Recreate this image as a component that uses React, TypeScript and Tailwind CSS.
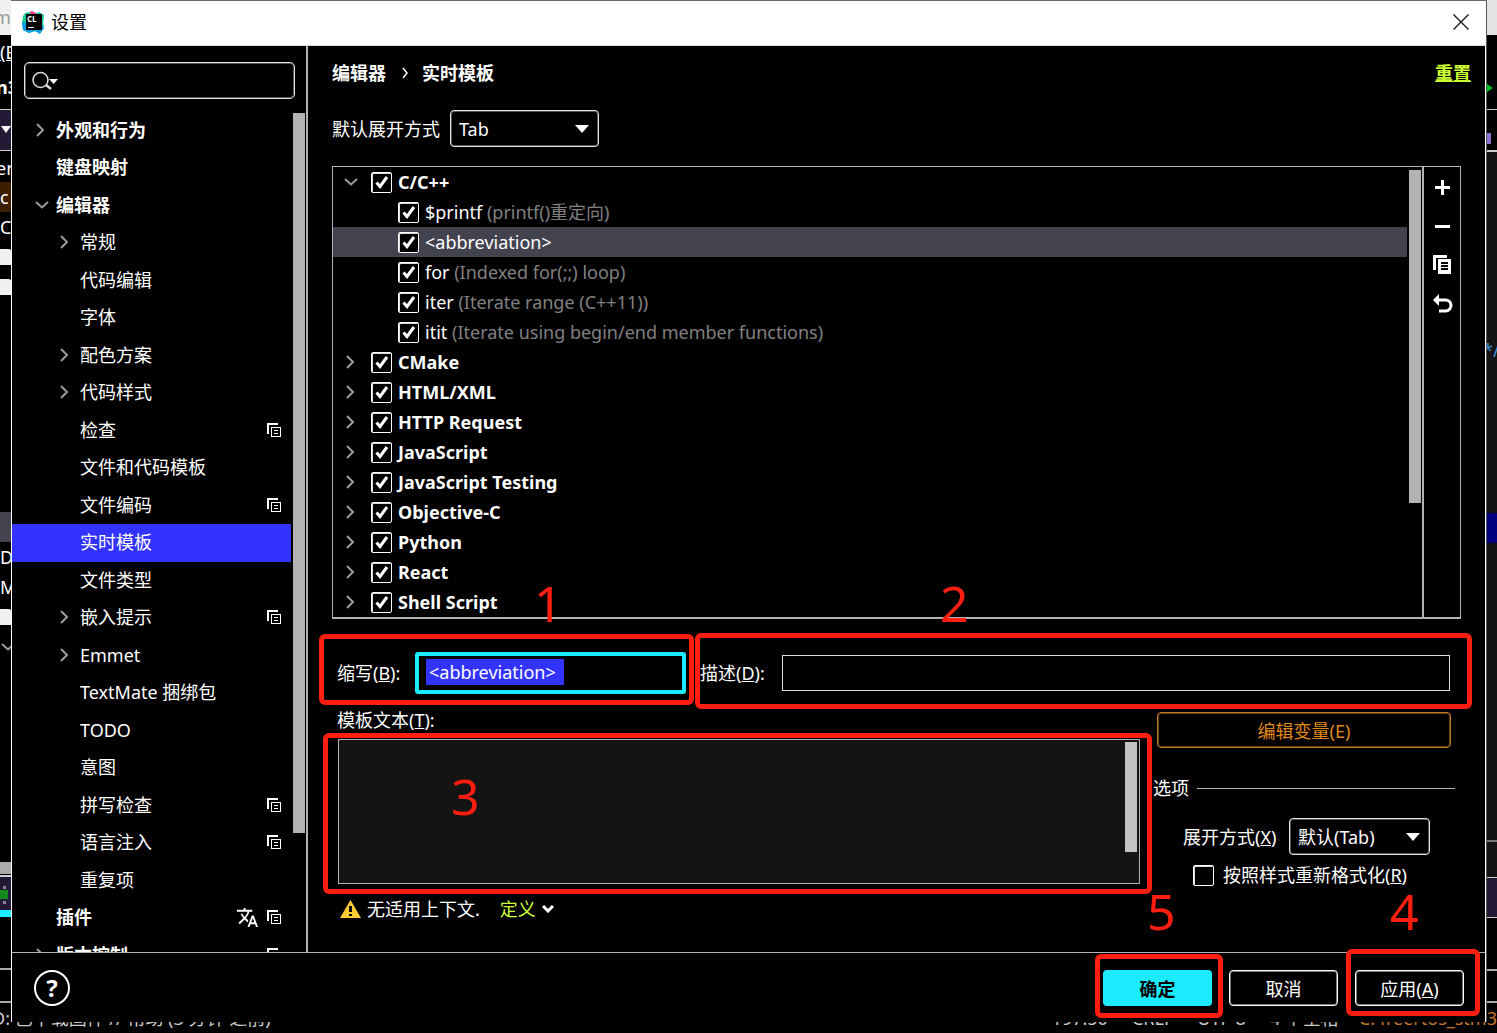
import React from "react";
import { MdTranslate } from "react-icons/md";

type IconProps = { className?: string };

function ChevronRight({ className = "" }: IconProps) {
  return (
    <svg viewBox="0 0 12 16" className={`h-4 w-3 shrink-0 ${className}`} fill="none" stroke="#9d9d9d" strokeWidth="2" aria-hidden="true">
      <path d="M2 2 L8 8 L2 14" />
    </svg>
  );
}

function ChevronDown({ className = "" }: IconProps) {
  return (
    <svg viewBox="0 0 16 12" className={`h-3 w-4 shrink-0 ${className}`} fill="none" stroke="#9d9d9d" strokeWidth="2" aria-hidden="true">
      <path d="M2 3 L8 8.500 L14 3" />
    </svg>
  );
}

function ProjectLevelIcon() {
  return (
    <svg viewBox="0 0 14 14" className="size-3.5 shrink-0" shapeRendering="crispEdges" aria-hidden="true">
      <path d="M0 0H11V2H2V11H0Z" fill="#fff" />
      <path d="M4 4H14V14H4Z" fill="#fff" />
      <path d="M5 5H13V13H5Z" fill="#000" />
      <path d="M7 7H11V8H7ZM7 10H11V11H7Z" fill="#fff" />
    </svg>
  );
}

function ClionLogo() {
  return (
    <svg viewBox="0 0 23 23" className="h-[23px] w-[23px]" aria-hidden="true">
      <path d="M1 5 L3 2 L7 1 L12 3 L17 1 L22 4 L21 10 L22 17 L18 22 L13 20 L7 22 L1 19 L0 12 Z" fill="#22cf96" />
      <path d="M8 1 L10 0 L14 2 L16 5 L9 5 Z" fill="#f0388c" />
      <path d="M0 11 L5 12 L9 19 L20 13 L22 17 L18 23 L13 20 L7 22 L1 19 Z" fill="#0a9de8" />
      <path d="M16 3 L22 4 L21 12 L18 12 Z" fill="#20c9a8" />
      <rect x="4" y="3" width="16" height="16" fill="#000" />
      <text x="5" y="11" fontSize="8" fontWeight="700" fill="#fff" fontFamily="Open Sans, sans-serif">CL</text>
      <rect x="6" y="16" width="6" height="1" fill="#fff" />
    </svg>
  );
}

function Check({ id, checked = true }: { id: string; checked?: boolean }) {
  return (
    <span className="relative size-[21px] shrink-0">
      <input
        id={id}
        type="checkbox"
        defaultChecked={checked}
        className="peer block size-[21px] appearance-none rounded-[2px] border border-white bg-black shadow-[inset_1px_1px_0_#ddd]"
      />
      <svg viewBox="0 0 21 21" className="pointer-events-none absolute inset-0 hidden peer-checked:block" fill="none" stroke="#fff" strokeWidth="3" aria-hidden="true">
        <path d="M5.5 10.5 L9 14.5 L16 5" />
      </svg>
    </span>
  );
}

function Dropdown({ id, value, className }: { id: string; value: string; className: string }) {
  return (
    <span className={`relative ${className}`}>
      <select
        id={id}
        className="h-[37px] w-full appearance-none rounded-[4px] border border-[#e4e4e4] bg-black px-2 text-[18px] shadow-[inset_0_0_0_1px_#555]"
      >
        <option>{value}</option>
      </select>
      <svg viewBox="0 0 14 8" className="pointer-events-none absolute top-[15px] right-2.5 h-2 w-3.5" aria-hidden="true">
        <path d="M0 0H14L7 8Z" fill="#fff" />
      </svg>
    </span>
  );
}

function Mark({ box, digit, n }: { box: string; digit: string; n: number }) {
  return (
    <>
      <span className={`pointer-events-none absolute z-10 rounded-[6px] border-5 border-[#ff1e0f] ${box}`} />
      <span className={`pointer-events-none absolute z-10 text-[50px] leading-[50px] text-[#ff1e0f] ${digit}`}>{n}</span>
    </>
  );
}

type Node = { text: string; level: 0 | 1; arrow?: "right" | "down"; project?: boolean; translate?: boolean; selected?: boolean };

const settings: Node[] = [
  { text: "外观和行为", level: 0, arrow: "right" },
  { text: "键盘映射", level: 0 },
  { text: "编辑器", level: 0, arrow: "down" },
  { text: "常规", level: 1, arrow: "right" },
  { text: "代码编辑", level: 1 },
  { text: "字体", level: 1 },
  { text: "配色方案", level: 1, arrow: "right" },
  { text: "代码样式", level: 1, arrow: "right" },
  { text: "检查", level: 1, project: true },
  { text: "文件和代码模板", level: 1 },
  { text: "文件编码", level: 1, project: true },
  { text: "实时模板", level: 1, selected: true },
  { text: "文件类型", level: 1 },
  { text: "嵌入提示", level: 1, arrow: "right", project: true },
  { text: "Emmet", level: 1, arrow: "right" },
  { text: "TextMate 捆绑包", level: 1 },
  { text: "TODO", level: 1 },
  { text: "意图", level: 1 },
  { text: "拼写检查", level: 1, project: true },
  { text: "语言注入", level: 1, project: true },
  { text: "重复项", level: 1 },
  { text: "插件", level: 0, project: true, translate: true },
  { text: "版本控制", level: 0, arrow: "right", project: true },
];

function SettingsRow({ node }: { node: Node }) {
  return (
    <li
      className={`flex h-[37px] shrink-0 items-center pr-2.5 pb-0.5 even:h-[38px] ${node.level === 0 ? "pl-5 font-bold" : "pl-11"} ${node.selected ? "bg-[#3333ff]" : ""}`}
    >
      <span className="flex w-6 shrink-0 pl-0.5">
        {node.arrow === "right" && <ChevronRight className="ml-px" />}
        {node.arrow === "down" && <ChevronDown />}
      </span>
      <span className="flex-1 whitespace-nowrap">{node.text}</span>
      {node.translate && <MdTranslate className="mr-2 size-[23px]" aria-hidden="true" />}
      {node.project && <ProjectLevelIcon />}
    </li>
  );
}

function Sidebar() {
  return (
    <aside className="flex w-[296px] shrink-0 flex-col border-r-2 border-[#b3b3b3]">
      <label className="mt-4 mr-[11px] ml-3 flex h-[37px] shrink-0 items-center rounded-[5px] border border-[#e4e4e4] px-[7px] shadow-[inset_0_0_0_1px_#555]">
        <svg viewBox="0 0 26 20" className="h-5 w-[26px] shrink-0" aria-hidden="true">
          <circle cx="8.500" cy="9" r="7.500" fill="none" stroke="#ddd" strokeWidth="1.500" />
          <path d="M14 14 L19 18" stroke="#ddd" strokeWidth="2.500" />
          <path d="M17 8H26L21.500 13Z" fill="#fff" />
        </svg>
        <input type="search" aria-label="搜索设置" className="min-w-0 flex-1 appearance-none bg-transparent outline-none" />
      </label>
      <div className="mt-3 flex min-h-0 flex-1">
        <ul className="flex min-w-0 flex-1 flex-col overflow-hidden pt-px" aria-label="设置">
          {settings.map((n) => (
            <SettingsRow key={n.text} node={n} />
          ))}
        </ul>
        <div className="mt-0.5 mr-px ml-0.5 h-[720px] w-3 bg-[#b3b3b3]" />
      </div>
    </aside>
  );
}

type Template = { name: string; hint?: string; group?: "right" | "down"; selected?: boolean };

const templates: Template[] = [
  { name: "C/C++", group: "down" },
  { name: "$printf", hint: "(printf()重定向)" },
  { name: "<abbreviation>", selected: true },
  { name: "for", hint: "(Indexed for(;;) loop)" },
  { name: "iter", hint: "(Iterate range (C++11))" },
  { name: "itit", hint: "(Iterate using begin/end member functions)" },
  { name: "CMake", group: "right" },
  { name: "HTML/XML", group: "right" },
  { name: "HTTP Request", group: "right" },
  { name: "JavaScript", group: "right" },
  { name: "JavaScript Testing", group: "right" },
  { name: "Objective-C", group: "right" },
  { name: "Python", group: "right" },
  { name: "React", group: "right" },
  { name: "Shell Script", group: "right" },
];

function TemplateRow({ t }: { t: Template }) {
  const id = `tpl-${t.name}`;
  return (
    <li className={`flex h-[30px] items-center ${t.group ? "pl-2.5 font-bold" : "pl-[65px]"} ${t.selected ? "bg-[#43424f]" : ""}`}>
      {t.group && (
        <span className="flex w-7 shrink-0">
          {t.group === "right" ? <ChevronRight className="ml-0.5" /> : <ChevronDown />}
        </span>
      )}
      <Check id={id} />
      <label htmlFor={id} className="ml-1.5 whitespace-nowrap">
        {t.name}
        {t.hint && <span className="text-[#808080]"> {t.hint}</span>}
      </label>
    </li>
  );
}

function TemplatePanel() {
  return (
    <div className="flex border border-b-2 border-[#b3b3b3]">
      <ul className="min-w-0 flex-1" aria-label="实时模板">
        {templates.map((t) => (
          <TemplateRow key={t.name} t={t} />
        ))}
      </ul>
      <div className="mt-[3px] mr-px ml-0.5 h-[333px] w-3 bg-[#b3b3b3]" />
      <div className="flex w-[38px] flex-col items-center gap-[19px] border-l-2 border-[#b3b3b3] pt-2.5 pl-0.5">
        <button aria-label="添加" className="size-5">
          <svg viewBox="0 0 20 20" shapeRendering="crispEdges"><path d="M8 3H11V9H17V12H11V18H8V12H2V9H8Z" fill="#fff" /></svg>
        </button>
        <button aria-label="移除" className="size-5">
          <svg viewBox="0 0 20 20" shapeRendering="crispEdges"><path d="M2 9H17V12H2Z" fill="#fff" /></svg>
        </button>
        <button aria-label="复制" className="size-5">
          <svg viewBox="0 0 20 20" shapeRendering="crispEdges">
            <path d="M0 0H14V3H3V15H0Z M5 4H18V19H5Z" fill="#fff" />
            <path d="M8 7H15V9H8ZM8 10H15V12H8ZM8 13H15V15H8Z" fill="#000" />
          </svg>
        </button>
        <button aria-label="还原" className="size-5">
          <svg viewBox="0 0 20 20">
            <path d="M3 6H12A5.500 5.500 0 0 1 13 17H6" fill="none" stroke="#fff" strokeWidth="3" />
            <path d="M0 6L6 0V12Z" fill="#fff" />
          </svg>
        </button>
      </div>
    </div>
  );
}

function Editor() {
  return (
    <div className="flex min-h-0 flex-1 flex-col pt-[33px]">
      <div className="flex h-[42px] shrink-0 items-center pl-[5px]">
        <div className="relative flex items-center">
          <label htmlFor="abbr" className="w-[78px] whitespace-nowrap">缩写(<u>B</u>):</label>
          <div className="flex h-[42px] w-[271px] items-start rounded-[3px] border-4 border-[#1aebff] px-[7px] pt-[3px]">
            <input id="abbr" defaultValue="<abbreviation>" className="h-[26px] w-[138px] bg-[#3333ff] pl-[3px] outline-none" />
          </div>
          <Mark n={1} box="-top-[18px] -left-[18px] -right-2 -bottom-[11px]" digit="-top-[74px] left-[197px]" />
        </div>
        <div className="relative ml-3.5 flex flex-1 items-center">
          <label htmlFor="desc" className="w-[82px] whitespace-nowrap">描述(<u>D</u>):</label>
          <input id="desc" className="mr-[11px] h-9 min-w-0 flex-1 border border-[#dcdcdc] bg-black outline-none" />
          <Mark n={2} box="-top-[22px] -left-[5px] -right-[11px] -bottom-[18px]" digit="-top-[77px] left-[240px]" />
        </div>
      </div>
      <div className="flex min-h-0 flex-1 pl-[5px]">
        <div className="flex min-w-0 flex-1 flex-col">
          <label htmlFor="tpl-text" className="mt-3 mb-[5px] h-7 shrink-0 leading-7">模板文本(<u>T</u>):</label>
          <div className="relative ml-px flex min-h-0 flex-1 border border-[#b3b3b3] bg-[#141414]">
            <textarea id="tpl-text" className="min-w-0 flex-1 resize-none bg-transparent outline-none" />
            <div className="mt-0.5 mr-0.5 h-[110px] w-3 bg-[#c3c3c3]" />
            <Mark n={3} box="-top-[7px] -left-[16px] -right-[13px] -bottom-[11px]" digit="top-[31px] left-[112px]" />
          </div>
          <div className="mt-[11px] mb-[29px] flex h-7 shrink-0 items-center pl-[3px]">
            <svg viewBox="0 0 21 18" className="h-[18px] w-[21px]" aria-hidden="true">
              <path d="M10.500 0L21 18H0Z" fill="#ffcc33" />
              <path d="M9 6H12V12H9ZM9 14H12V16H9Z" fill="#000" />
            </svg>
            <span className="ml-1.5">无适用上下文.</span>
            <a href="#define" className="ml-5 flex items-center text-[#ccff33]">
              定义
              <svg viewBox="0 0 12 8" className="ml-1.5 h-2 w-3" fill="none" stroke="#fff" strokeWidth="3" aria-hidden="true">
                <path d="M1 1L6 6L11 1" />
              </svg>
            </a>
          </div>
        </div>
        <div className="ml-[13px] flex w-[308px] shrink-0 flex-col">
          <button className="mt-[18px] mr-2.5 ml-1 h-9 rounded-[4px] border border-[#b87a28] pt-0.5 text-[#e08a1a] shadow-[inset_0_0_0_1px_#6a4414]">
            编辑变量(E)
          </button>
          <fieldset className="mt-7">
            <legend className="flex w-full items-center gap-2">
              <span>选项</span>
              <span className="mr-1.5 h-px flex-1 bg-[#b3b3b3]" />
            </legend>
            <div className="mt-[18px] flex items-center pl-[30px]">
              <label htmlFor="expand" className="w-[106px] whitespace-nowrap">展开方式(<u>X</u>)</label>
              <Dropdown id="expand" value="默认(Tab)" className="w-[141px]" />
            </div>
            <div className="mt-2 flex items-center gap-[9px] pl-10">
              <Check id="reformat" checked={false} />
              <label htmlFor="reformat" className="whitespace-nowrap">按照样式重新格式化(<u>R</u>)</label>
            </div>
          </fieldset>
        </div>
      </div>
    </div>
  );
}

function Footer() {
  return (
    <footer className="flex h-[70px] shrink-0 items-center border-t border-[#b3b3b3] pr-[21px] pl-[22px]">
      <button aria-label="帮助" className="flex size-9 items-center justify-center rounded-full border-2 border-white text-[24px] leading-none font-bold">?</button>
      <div className="ml-auto flex gap-[17px]">
        <div className="relative">
          <button className="h-9 w-[109px] rounded-[4px] bg-[#1aebff] pt-0.5 font-bold text-black">确定</button>
          <Mark n={5} box="-top-[16px] -left-2 -right-[11px] -bottom-3" digit="-top-[84px] left-[44px]" />
        </div>
        <button className="h-9 w-[109px] rounded-[4px] border border-white pt-0.5 shadow-[inset_0_0_0_1px_#777]">取消</button>
        <div className="relative">
          <button className="h-9 w-[109px] rounded-[4px] border border-white pt-0.5 shadow-[inset_0_0_0_1px_#777]">应用(<u>A</u>)</button>
          <Mark n={4} box="-top-[21px] -left-[9px] -right-4 -bottom-[10px]" digit="-top-[84px] left-[35px]" />
        </div>
      </div>
    </footer>
  );
}

function Dialog() {
  return (
    <section className="absolute top-0 right-2.5 bottom-[11px] left-[11px] flex flex-col border-t border-r border-t-[#6b6b6b] border-r-[#555] bg-black" role="dialog" aria-label="设置">
      <header className="flex h-[45px] shrink-0 items-center border-b border-[#d5ddd9] bg-white pr-[17px] pb-0.5 pl-[11px] text-black">
        <ClionLogo />
        <h1 className="ml-1.5">设置</h1>
        <button aria-label="关闭" className="ml-auto size-4">
          <svg viewBox="0 0 16 16" stroke="#111" strokeWidth="1.300"><path d="M0.500 0.500L15.500 15.500M15.500 0.500L0.500 15.500" /></svg>
        </button>
      </header>
      <div className="flex min-h-0 flex-1 flex-col border-r border-l border-white">
        <div className="flex min-h-0 flex-1">
          <Sidebar />
          <main className="flex min-w-0 flex-1 flex-col pr-6 pl-6">
            <div className="-mr-2.5 flex h-[54px] shrink-0 items-center pb-px font-bold">
              <span>编辑器</span>
              <svg viewBox="0 0 6 12" className="mr-3.5 ml-4 h-3 w-1.5" fill="none" stroke="#fff" strokeWidth="1.500" aria-hidden="true">
                <path d="M1 1L5 6L1 11" />
              </svg>
              <span>实时模板</span>
              <a href="#reset" className="ml-auto text-[#ccff33] underline">重置</a>
            </div>
            <div className="mt-2.5 mb-[19px] flex shrink-0 items-center">
              <label htmlFor="default-expand" className="w-[118px] whitespace-nowrap">默认展开方式</label>
              <Dropdown id="default-expand" value="Tab" className="w-[149px]" />
            </div>
            <TemplatePanel />
            <Editor />
          </main>
        </div>
        <Footer />
      </div>
    </section>
  );
}

function BackgroundLeft() {
  return (
    <div className="flex w-3 shrink-0 flex-col overflow-hidden whitespace-nowrap">
      <div className="h-[35px] bg-[#f0f0f0] leading-[35px] text-[#999]"><span className="-ml-1.5">m</span></div>
      <div className="h-[35px] leading-[35px] underline">(E</div>
      <div className="h-[39px] leading-[35px] font-bold"><span className="-ml-1">n3</span></div>
      <div className="flex h-[42px] items-center border-y border-[#ccc] bg-[#251a35]">
        <svg viewBox="0 0 12 8" className="h-2 w-3"><path d="M1 0H11L6 7Z" fill="#fff" /></svg>
      </div>
      <div className="h-[31px] leading-[35px]"><span className="-ml-1">er</span></div>
      <div className="h-[30px] bg-[#3d1f00] leading-[30px]">c</div>
      <div className="h-[37px] leading-[30px]">C</div>
      <div className="h-4 rounded-tr-sm bg-[#f0f0f0]" />
      <div className="mt-3.5 h-4 rounded-tr-sm bg-[#f0f0f0]" />
      <div className="mt-[217px] h-[30px] bg-[#43424f]" />
      <div className="h-[30px] leading-[30px]">D</div>
      <div className="h-[37px] leading-[30px]">M</div>
      <div className="h-4 rounded-tr-sm bg-[#f0f0f0]" />
      <ChevronDown className="mt-4" />
      <div className="mt-[209px] h-3 bg-[#aaa]" />
      <div className="mt-px h-0.5 bg-[#ccc]" />
      <div className="flex h-[33px] flex-col items-start justify-end bg-[#251a35]">
        <div className="ml-[3px] size-[3px] bg-[#8a8292]" />
        <div className="mt-px h-[9px] w-2 bg-[#138a1e]" />
        <div className="mt-0.5 mb-1.5 ml-[3px] size-[3px] bg-[#8a8292]" />
      </div>
      <div className="h-[7px] bg-[#1aebff]" />
      <div className="mt-[51px] h-0.5 bg-[#aaa]" />
    </div>
  );
}

function BackgroundRight() {
  return (
    <div className="ml-auto flex w-2.5 shrink-0 flex-col overflow-hidden whitespace-nowrap">
      <div className="h-[35px] bg-[#e4e4e4]" />
      <svg viewBox="0 0 6 8" className="mt-[49px] h-2 w-1.5"><path d="M0 0L6 4L0 8Z" fill="#00c020" /></svg>
      <div className="mt-[17px] h-px bg-[#ccc]" />
      <div className="mt-[23px] h-[11px] w-1 bg-[#8f6fd0]" />
      <div className="mt-1.5 h-0.5 bg-[#ccc]" />
      <div className="h-[361px] bg-[#141414] pt-[183px] leading-[30px] text-[#3a8fd0]"><span className="-ml-1">*/</span></div>
      <div className="h-[30px] bg-[#000080]" />
      <div className="h-[297px] bg-[#141414]" />
      <div className="h-0.5 bg-[#777]" />
      <div className="h-[35px] bg-[#141414]" />
      <div className="h-[41px] border-y border-[#ccc] bg-[#251a35]" />
      <div className="mt-[51px] h-0.5 bg-[#aaa]" />
    </div>
  );
}

export default function App() {
  return (
    <div className="relative flex h-screen flex-col overflow-hidden bg-black font-['Noto_Sans','Noto_Sans_CJK_SC',sans-serif] text-[18px] leading-6 text-white">
      <div className="flex min-h-0 flex-1">
        <BackgroundLeft />
        <BackgroundRight />
      </div>
      <div className="flex h-8 shrink-0 items-center overflow-hidden border-t-2 border-[#aaa] whitespace-nowrap text-[#ccc]">
        <span className="-ml-2">D: 已下载固件 // 帮助 (3 分钟 之前)</span>
        <span className="ml-auto">197:50</span>
        <span className="ml-6">CRLF</span>
        <span className="ml-6">UTF-8</span>
        <span className="ml-6">4 个空格</span>
        <span className="ml-5 text-[#c87820]">C: freertos_stm3</span>
      </div>
      <Dialog />
    </div>
  );
}
